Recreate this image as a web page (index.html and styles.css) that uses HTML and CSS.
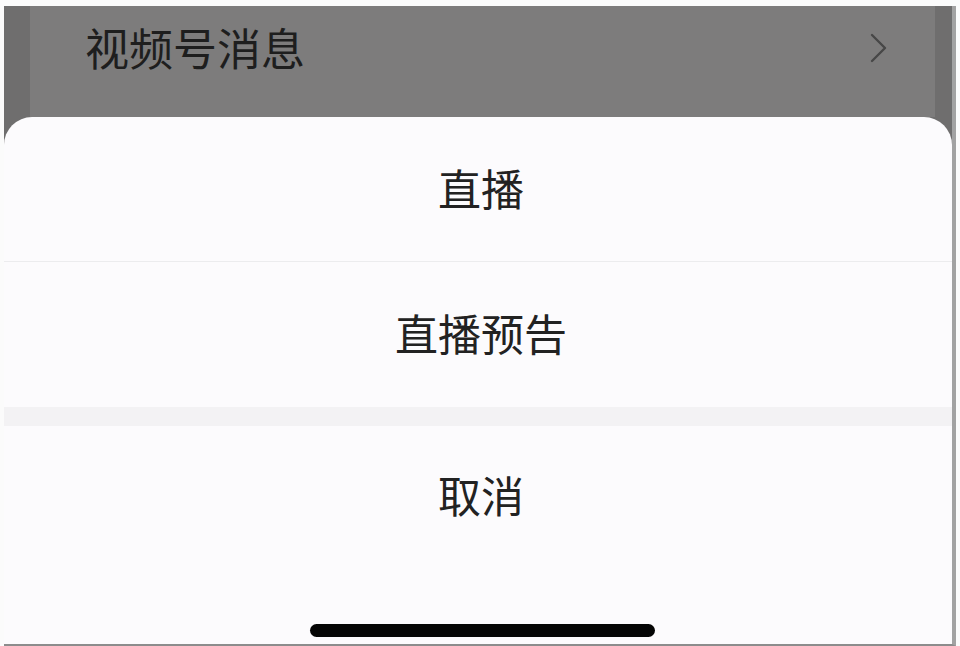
FILE: index.html
```html
<!DOCTYPE html>
<html>

<head>
    <meta charset="utf-8">
    <title>直播</title>
    <link rel="stylesheet" href="styles.css">
</head>

<body>
    <div class="device">
        <!-- list page behind the dimmed overlay -->
        <div class="backdrop">
            <div class="card">
                <span class="card-title">视频号消息</span>
                <svg class="chevron" width="20" height="32" viewBox="0 0 20 32">
                    <polyline points="3,3 16,16 3,29" fill="none" stroke="#474747" stroke-width="2.4"
                        stroke-linecap="round" stroke-linejoin="round" />
                </svg>
            </div>
        </div>

        <!-- action sheet -->
        <div class="sheet">
            <div class="sheet-item">直播</div>
            <div class="sheet-item">直播预告</div>
            <div class="sheet-gap"></div>
            <div class="sheet-item cancel">取消</div>
            <div class="home-bar">
                <div class="home-indicator"></div>
            </div>
        </div>
    </div>
</body>

</html>
```

FILE: styles.css
```css
html,
body {
    margin: 0;
    height: 100%;
    overflow: hidden;
}

body {
    background: #fbfbfb;
    font-family: "Noto Sans CJK SC", "Noto Sans", sans-serif;
}

.device {
    margin: 6px 0 0 4px;
    width: 948px;
    height: 638px;
    border-right: 4px solid #a2a2a2;
    border-bottom: 2px solid #8c8c8c;
    background: #6f6e6e;
    display: flex;
    flex-direction: column;
    overflow: hidden;
}

.backdrop {
    height: 111px;
    flex: none;
    display: flex;
}

.card {
    flex: 1;
    margin: 0 17px 0 26px;
    background: #7d7c7c;
    display: flex;
    align-items: flex-start;
    padding: 11px 46px 0 55px;
}

.card-title {
    flex: 1;
    font-size: 44px;
    line-height: 60px;
    color: #1e1e1e;
}

.chevron {
    margin-top: 15px;
}

.sheet {
    flex: 1;
    background: #fcfbfd;
    border-radius: 28px 28px 0 0;
    display: flex;
    flex-direction: column;
}

.sheet-item {
    height: 144px;
    box-sizing: border-box;
    display: flex;
    align-items: center;
    justify-content: center;
    padding: 0 0 5px 6px;
    font-size: 43px;
    color: #222;
}

.sheet-item + .sheet-item {
    height: 146px;
    border-top: 1px solid #ececee;
}

.sheet-gap {
    height: 19px;
    background: #f3f2f4;
}

.sheet-item.cancel {
    height: 140px;
}

.home-bar {
    flex: 1;
    display: flex;
    justify-content: center;
    align-items: flex-end;
    padding: 0 0 7px 9px;
}

.home-indicator {
    width: 345px;
    height: 13px;
    border-radius: 7px;
    background: #050505;
}
```
